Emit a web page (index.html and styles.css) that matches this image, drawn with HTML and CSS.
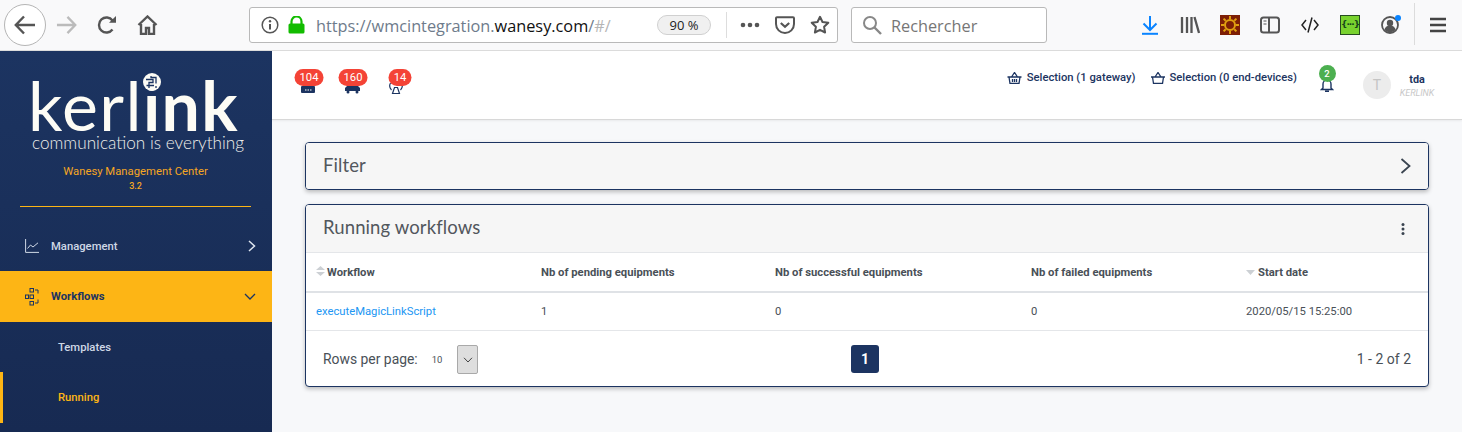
FILE: index.html
```html
<!DOCTYPE html>
<html lang="fr">
<head>
<meta charset="utf-8">
<title>Wanesy Management Center</title>
<link rel="stylesheet" href="styles.css">
</head>
<body>
<div class="toolbar">
  <div class="nav">
    <div class="back"><svg width="22" height="20" viewBox="0 0 22 20"><path d="M10 1.500 1.800 10l8.200 8.500M2 10h19" fill="none" stroke="#555" stroke-width="2.400"/></svg></div>
    <svg class="fwd" width="21" height="20" viewBox="0 0 22 20"><path d="M12 1.500 20.200 10 12 18.500M20 10H1" fill="none" stroke="#bbb" stroke-width="2.400"/></svg>
    <svg class="reload" width="20" height="20" viewBox="0 0 20 20"><path d="M15.500 14.500A7.500 7.500 0 1 1 15.500 5.500" fill="none" stroke="#555" stroke-width="2.400"/><path d="M12 7.800h7V1z" fill="#555"/></svg>
    <svg class="home" width="21" height="20" viewBox="0 0 21 20"><path d="M1.500 10 10.500 1.500l9 8.500" fill="none" stroke="#555" stroke-width="2.400"/><path d="M4 9v10h5v-6h3v6h5V9" fill="none" stroke="#555" stroke-width="2.400"/></svg>
  </div>
  <div class="urlbar">
    <svg class="info" width="18" height="18" viewBox="0 0 18 18"><circle cx="9" cy="9" r="7.800" fill="none" stroke="#555" stroke-width="1.500"/><path d="M9 8v5.500" stroke="#555" stroke-width="2"/><circle cx="9" cy="5.300" r="1.200" fill="#555"/></svg>
    <svg class="lock" width="17" height="18" viewBox="0 0 17 18"><path d="M3.500 8V5.500a5 5 0 0 1 10 0V8" fill="none" stroke="#12bc00" stroke-width="2.200"/><rect x="0.500" y="7.500" width="16" height="10" rx="1.500" fill="#12bc00"/></svg>
    <div class="url"><span class="url-dim">https://wmcintegration.</span><span class="url-main">wanesy.com</span><span class="url-dim">/</span><span class="url-faint">#/</span></div>
    <div class="zoom">90 %</div>
    <div class="urlsep"></div>
    <svg class="dots" width="20" height="6" viewBox="0 0 20 6"><circle cx="3" cy="3" r="2.300" fill="#555"/><circle cx="10" cy="3" r="2.300" fill="#555"/><circle cx="17" cy="3" r="2.300" fill="#555"/></svg>
    <svg class="pocket" width="20" height="18" viewBox="0 0 20 18"><path d="M2 1.200h16a1 1 0 0 1 1 1V8a9 9 0 0 1-18 0V2.200a1 1 0 0 1 1-1z" fill="none" stroke="#555" stroke-width="2"/><path d="M5.800 7 10 10.800 14.200 7" fill="none" stroke="#555" stroke-width="2.200"/></svg>
    <svg class="star" width="20" height="19" viewBox="0 0 20 19"><path d="M10 1.800 12.500 7l5.800.8-4.200 4 1 5.700L10 14.800l-5.100 2.700 1-5.700-4.200-4L7.500 7z" fill="none" stroke="#555" stroke-width="2" stroke-linejoin="round"/></svg>
  </div>
  <div class="search">
    <svg width="20" height="20" viewBox="0 0 20 20"><circle cx="8" cy="8" r="6" fill="none" stroke="#888" stroke-width="2"/><path d="M12.500 12.500 19 19" stroke="#888" stroke-width="2.400"/></svg>
    <span class="search-text">Rechercher</span>
  </div>
  <div class="tools">
    <div class="tool"><svg width="16" height="19" viewBox="0 0 16 19"><path d="M8 0v13M1.500 7.500 8 14l6.500-6.500" fill="none" stroke="#0a84ff" stroke-width="2"/><path d="M0 17.800h16" stroke="#0a84ff" stroke-width="2"/></svg></div>
    <div class="tool"><svg width="20" height="18" viewBox="0 0 20 18"><path d="M2 1v16M7 1v16M11.500 1v16M14.500 1 19 17" fill="none" stroke="#555" stroke-width="2.300"/></svg></div>
    <div class="tool"><div class="sun"><svg width="20" height="20" viewBox="0 0 20 20"><circle cx="10" cy="10" r="5" fill="none" stroke="#e0a010" stroke-width="2"/><path d="M10 1v3M10 16v3M1 10h3M16 10h3M3.600 3.600l2.100 2.100M14.300 14.300l2.100 2.100M3.600 16.400l2.100-2.100M14.300 5.700l2.100-2.100" stroke="#e0a010" stroke-width="2"/></svg></div></div>
    <div class="tool"><svg width="20" height="18" viewBox="0 0 20 18"><rect x="1" y="1.500" width="18" height="15" rx="2.500" fill="none" stroke="#555" stroke-width="2"/><path d="M9 1.500v15" stroke="#555" stroke-width="2"/><path d="M3.500 5h3M3.500 8h3" stroke="#555" stroke-width="1.200"/></svg></div>
    <div class="tool"><svg width="18" height="16" viewBox="0 0 18 16"><path d="M5 3 1 8l4 5M13 3l4 5-4 5M11 .5 7 15.500" fill="none" stroke="#222" stroke-width="1.500"/></svg></div>
    <div class="tool"><div class="curly">{···}</div></div>
    <div class="tool account"><svg width="18" height="18" viewBox="0 0 18 18"><circle cx="9" cy="9" r="8" fill="none" stroke="#555" stroke-width="1.800"/><circle cx="9" cy="7" r="3.200" fill="#555"/><path d="M3.500 14a5.500 4.500 0 0 1 11 0 8 8 0 0 1-11 0z" fill="#555"/></svg><i class="account-dot"></i></div>
  </div>
  <div class="toolsep"></div>
  <svg class="burger" width="16" height="16" viewBox="0 0 16 16"><path d="M0 2h16M0 8h16M0 14h16" stroke="#444" stroke-width="2.400"/></svg>
</div>

<div class="app">
  <aside class="sidebar">
    <div class="brand">
      <div class="logo">
        <div class="logo-word"><span>kerl</span><b>ink</b></div>
        <svg class="logo-mark" width="18" height="18" viewBox="0 0 18 18"><circle cx="9" cy="9" r="9" fill="#fdfcf5"/><path d="M3 6.500h7v3H6v3h5M8 3v1.500h5v6M3.500 12.500H6v2.500M13 13v2" fill="none" stroke="#1c3461" stroke-width="1.300"/></svg>
        <div class="logo-tag">communication is everything</div>
      </div>
      <div class="app-name">Wanesy Management Center</div>
      <div class="app-version">3.2</div>
    </div>
    <nav>
      <div class="menu-item">
        <svg width="14" height="14" viewBox="0 0 14 14"><path d="M.6 0v13.400H14" fill="none" stroke="#cfd8e6" stroke-width="1"/><path d="M2.500 9.500 5.500 6l2.500 2L13 3.800" fill="none" stroke="#cfd8e6" stroke-width="1"/></svg>
        <span>Management</span>
        <svg class="chev" width="8" height="12" viewBox="0 0 8 12"><path d="M1 1l5.500 5L1 11" fill="none" stroke="#dfe6f0" stroke-width="1.500"/></svg>
      </div>
      <div class="menu-item active">
        <svg width="14" height="18" viewBox="0 0 14 18"><g fill="none" stroke="#1c3461" stroke-width="1"><rect x="5" y=".5" width="3.500" height="3.500"/><rect x="5" y="7" width="3.500" height="3.500"/><rect x="5" y="13.500" width="3.500" height="3.500"/><rect x=".5" y="7" width="3" height="3.500"/><path d="M10 2h3v3.500M10 15h3v-3.500"/></g></svg>
        <span>Workflows</span>
        <svg class="chev" width="12" height="8" viewBox="0 0 12 8"><path d="M1 1l5 5 5-5" fill="none" stroke="#1c3461" stroke-width="1.300"/></svg>
      </div>
      <div class="sub-item">Templates</div>
      <div class="sub-item current">Running</div>
    </nav>
  </aside>

  <main class="main">
    <header class="topbar">
      <div class="alerts">
        <div class="alert">
          <span class="badge">104</span>
          <svg width="14" height="14" viewBox="0 0 14 14"><rect y="6" width="14" height="7" rx="1" fill="#1c3461"/><path d="M4 10h1.500M6.500 10H8M9 10h1.500" stroke="#fff" stroke-width="1"/></svg>
        </div>
        <div class="alert">
          <span class="badge">160</span>
          <svg width="15" height="14" viewBox="0 0 15 14"><path d="M0 8l2-2h11l2 2v3H0z" fill="#1c3461"/><circle cx="3" cy="12" r="1.500" fill="#1c3461"/><circle cx="12" cy="12" r="1.500" fill="#1c3461"/></svg>
        </div>
        <div class="alert alert-short">
          <span class="badge">14</span>
          <svg width="14" height="14" viewBox="0 0 14 14"><g fill="none" stroke="#1c3461" stroke-width="1.200"><path d="M1.500 3a6 6 0 0 0 1 7M12.500 3a6 6 0 0 1-1 7M3.500 13.500l2-6h3l2 6z"/></g></svg>
        </div>
      </div>
      <div class="selection">
        <svg width="15" height="12" viewBox="0 0 14 12"><path d="M0 5h14M1.500 5l1 6.500h9l1-6.500M4 5l3-4.500L10 5M5 7v3M7 7v3M9 7v3" fill="none" stroke="#1c3461" stroke-width="1.300"/></svg>
        <span>Selection (1 gateway)</span>
      </div>
      <div class="selection second">
        <svg width="14" height="12" viewBox="0 0 14 12"><path d="M0 5h14M1.500 5l1 6.500h9l1-6.500M4 5l3-4.500L10 5" fill="none" stroke="#1c3461" stroke-width="1.300"/></svg>
        <span>Selection (0 end-devices)</span>
      </div>
      <div class="bell">
        <svg width="14" height="14" viewBox="0 0 14 14"><path d="M3 10V6a4 4 0 0 1 8 0v4l1.500 1.500h-11zM5 13.300h4" fill="none" stroke="#1c3461" stroke-width="1.400"/></svg>
        <span class="bell-count">2</span>
      </div>
      <div class="avatar">T</div>
      <div class="user">
        <div class="user-name">tda</div>
        <div class="user-org">KERLINK</div>
      </div>
    </header>

    <section class="card filter">
      <div class="card-head">
        <h2>Filter</h2>
        <svg width="11" height="16" viewBox="0 0 11 16"><path d="M1.500 1l8 7-8 7" fill="none" stroke="#3a4450" stroke-width="1.800"/></svg>
      </div>
    </section>

    <section class="card">
      <div class="card-head">
        <h2>Running workflows</h2>
        <svg class="kebab" width="4" height="14" viewBox="0 0 4 14"><circle cx="2" cy="2.500" r="1.500" fill="#3a4450"/><circle cx="2" cy="7" r="1.500" fill="#3a4450"/><circle cx="2" cy="11.500" r="1.500" fill="#3a4450"/></svg>
      </div>
      <div class="grid-row grid-head">
        <div class="sort-cell"><svg class="sort-both" width="9" height="10" viewBox="0 0 9 10"><path d="M4.500 0 9 4H0zM0 6h9L4.500 10z" fill="#ccd0d4"/></svg><span>Workflow</span></div>
        <div>Nb of pending equipments</div>
        <div>Nb of successful equipments</div>
        <div>Nb of failed equipments</div>
        <div class="sort-cell"><svg class="sort-down" width="9" height="5" viewBox="0 0 9 5"><path d="M0 0h9L4.500 5z" fill="#ccd0d4"/></svg><span>Start date</span></div>
      </div>
      <div class="grid-row grid-body">
        <div><a class="link">executeMagicLinkScript</a></div>
        <div>1</div>
        <div>0</div>
        <div>0</div>
        <div>2020/05/15 15:25:00</div>
      </div>
      <div class="pager">
        <div class="rows">
          <span class="rows-label">Rows per page:</span>
          <span class="rows-value">10</span>
          <div class="rows-select"><svg width="10" height="6" viewBox="0 0 10 6"><path d="M1 .8 5 5 9 .8" fill="none" stroke="#444" stroke-width="1"/></svg></div>
        </div>
        <div class="page-btn">1</div>
        <div class="range">1 - 2 of 2</div>
      </div>
    </section>
  </main>
</div>
</body>
</html>
```

FILE: styles.css
```css
* { box-sizing: border-box; }
html, body { margin: 0; padding: 0; height: 432px; overflow: hidden; }
body { font-family: Roboto, sans-serif; background: #f7f8fa; }

.toolbar {
  height: 51px;
  display: flex;
  align-items: center;
  background: #f9f9fa;
  border-bottom: 1px solid #dcdcdc;
  padding-left: 4px;
  font-family: "Open Sans", sans-serif;
}
.nav { display: flex; align-items: center; width: 245px; flex: none; }
.back {
  width: 42px; height: 42px; border-radius: 50%;
  border: 1px solid #b5b5b5; background: #fff;
  display: flex; align-items: center; justify-content: center;
}
.fwd { margin-left: 10px; }
.reload { margin-left: 20px; }
.home { margin-left: 20px; }

.urlbar {
  width: 589px; height: 36px; flex: none;
  margin-top: -1px;
  display: flex; align-items: center;
  background: #fff;
  border: 1px solid #b9b9b9;
  border-radius: 3px;
  padding-left: 11px;
}
.lock { margin-left: 9px; flex: none; }
.url { margin-left: 11px; width: 328px; padding-top: 2px; font-size: 16.300px; white-space: nowrap; flex: none; }
.url-dim { color: #6e7b8b; }
.url-main { color: #111; }
.url-faint { color: #b5b5b5; }
.zoom {
  width: 54px; height: 20px; margin-left: 13px;
  border: 1px solid #d0d0d0; border-radius: 10px;
  background: #f0f0f0; color: #222;
  font-size: 13px; line-height: 18px; text-align: center;
}
.urlsep { width: 1px; height: 26px; background: #ddd; margin-left: 15px; }
.dots { margin-left: 13px; }
.pocket { margin-left: 15px; }
.star { margin-left: 15px; }

.search {
  width: 196px; height: 36px; flex: none;
  margin-left: 13px; margin-top: -1px;
  display: flex; align-items: center; gap: 9px;
  background: #fff;
  border: 1px solid #b9b9b9;
  border-radius: 3px;
  padding-left: 10px;
  font-size: 16.300px; color: #767676;
}
.search-text { padding-top: 2px; }
.tools { display: flex; margin-left: 83px; flex: none; }
.tool { width: 40px; height: 24px; display: flex; align-items: center; justify-content: center; position: relative; }
.sun { width: 20px; height: 20px; background: #7e1f05; }
.sun svg { display: block; }
.curly {
  width: 20px; height: 20px; background: #79d22e; border: 1px solid #274d20;
  font: 700 9px/17px "DejaVu Sans", sans-serif; color: #17451a; text-align: center; overflow: hidden; letter-spacing: -1px;
}
.account-dot {
  position: absolute; right: 9px; top: 2px;
  width: 6px; height: 6px; border-radius: 50%; background: #0a84ff;
}
.toolsep { width: 1px; height: 42px; background: #dcdcdc; margin-left: 4px; margin-top: -2px; flex: none; }
.burger { margin-left: 15px; flex: none; }

.app { display: flex; height: 381px; }

.sidebar {
  width: 272px; flex: none;
  background: linear-gradient(#1c3461, #172a52);
}
.brand {
  height: 156px;
  margin: 0 21px 0 20px;
  border-bottom: 1px solid #fdb515;
  text-align: center;
}
.logo { position: relative; padding: 25px 0 0 8px; text-align: left; }
.logo-word {
  font-family: Lato, sans-serif; font-weight: 400;
  font-size: 68px; line-height: 58px; height: 58px; color: #fdfcf5; white-space: nowrap; letter-spacing: 1.400px;
}
.logo-word b { font-weight: 700; }
.logo-mark { position: absolute; left: 123px; top: 22px; }
.logo-tag {
  font-family: Lato, sans-serif; font-weight: 300;
  font-size: 17.200px; line-height: 18px; color: #eeeeea; white-space: nowrap;
  padding-left: 4px;
}
.app-name { font-size: 11.300px; line-height: 14px; color: #f5a623; margin-top: 13px; }
.app-version { font-size: 9px; font-weight: 500; line-height: 10px; color: #f5a623; margin-top: 2px; }

nav { padding-top: 14px; }
.menu-item {
  height: 50px;
  display: flex; align-items: center;
  padding: 0 16px 0 25px;
  font-size: 11.250px; font-weight: 500; color: #cfd8e6;
}
.menu-item span { margin-left: 12px; flex: 1; }
.menu-item.active { background: #fdb515; color: #1c3461; font-weight: 700; height: 51px; }
.sub-item {
  height: 50px; line-height: 52px;
  padding-left: 58px;
  font-size: 11.250px; font-weight: 500; color: #cfd8e6;
}
.sub-item.current {
  height: 51px; line-height: 51px;
  color: #fdb515;
  border-left: 3px solid #fdb515;
  padding-left: 55px;
}

.main { flex: 1; min-width: 0; padding-bottom: 20px; }
.topbar {
  height: 69px;
  display: flex; align-items: center;
  background: #fff;
  border-bottom: 1px solid #d8d8d8;
  box-shadow: 0 1px 2px rgba(0,0,0,.06);
  margin-bottom: 22px;
  padding-right: 27px;
}
.alerts { display: flex; align-self: flex-start; margin-top: 18px; margin-left: 14px; margin-right: auto; }
.alert { width: 44px; height: 25px; position: relative; display: flex; justify-content: center; padding-top: 11px; }
.badge {
  position: absolute; left: calc(50% + 1px); top: 0; transform: translateX(-50%);
  min-width: 23px; height: 17px; padding: 0 5px;
  background: #f44336; color: #fff;
  border-radius: 9px;
  font-size: 11.250px; line-height: 17px; text-align: center;
}
.alert-short .badge { left: calc(50% + 4px); }
.selection {
  display: flex; align-items: center; gap: 5px;
  font-size: 11.250px; font-weight: 500; color: #1c3461;
  margin-top: -15px;
  white-space: nowrap;
}
.selection.second { margin-left: 16px; gap: 4px; }
.bell {
  position: relative; width: 14px; height: 14px;
  margin-left: 23px;
}
.bell svg { display: block; }
.bell-count {
  position: absolute; left: -1.500px; top: -13px;
  width: 17px; height: 17px; border-radius: 50%;
  background: #4caf50; color: #fff;
  font-size: 9.500px; font-weight: 500; line-height: 17px; text-align: center;
}
.avatar {
  width: 28px; height: 28px; border-radius: 50%;
  margin-left: 29px;
  background: #ececec; color: #c4c4c4;
  font-size: 14px; line-height: 28px; text-align: center;
}
.user { width: 36px; margin-left: 8px; text-align: center; margin-top: 1px; white-space: nowrap; }
.user-name { font-size: 10.800px; font-weight: 700; color: #1c3461; line-height: 14px; margin-bottom: 1px; }
.user-org { font-size: 9px; font-style: italic; color: #c8c8c8; line-height: 11px; }

.card {
  margin: 0 33px 14px;
  background: #fff;
  border: 1px solid #1c3461;
  border-radius: 4px;
  box-shadow: 0 2px 4px rgba(0,0,0,.25);
  overflow: hidden;
}
.filter { background: #f6f6f6; }
.card-head {
  height: 47px;
  display: flex; align-items: center; justify-content: space-between;
  padding: 0 17px;
  background: #f6f6f6;
}
.filter .card-head { height: 46px; }
.card-head h2 {
  margin: 0 0 3px;
  font-family: Lato, sans-serif; font-weight: 400; font-size: 18.500px; letter-spacing: .1px; color: #52575d;
}
.kebab { margin-right: 6px; }
.grid-row {
  display: grid;
  grid-template-columns: 225px 234px 256px 215px 1fr;
  padding-left: 10px;
  align-items: center;
  font-size: 11.250px; color: #495057;
}
.grid-head {
  height: 41px;
  border-top: 1px solid #e4e6e9;
  border-bottom: 2px solid #dfe2e6;
  font-weight: 700;
}
.grid-body {
  height: 38px;
  border-bottom: 1px solid #e4e6e9;
}
.sort-cell { display: flex; align-items: center; }
.sort-both { margin: -3px 2px 0 0; }
.sort-down { margin-right: 3px; }
.link { color: #2196f3; }

.pager {
  height: 55px;
  display: grid;
  grid-template-columns: 1fr auto 1fr;
  align-items: center;
  padding: 0 17px;
  font-size: 14px; color: #495057;
}
.rows { display: flex; align-items: center; }
.rows-label { font-size: 13.900px; }
.rows-value { font-size: 9.500px; margin: 2px 0 0 14px; }
.rows-select {
  width: 21px; height: 29px; margin: 2px 0 0 15px;
  background: #dedede; border: 1px solid #a9a9a9; border-radius: 2px;
  display: flex; align-items: center; justify-content: center;
}
.page-btn {
  width: 28px; height: 28px; margin-right: 4px;
  background: #1c3461; color: #fff; border-radius: 3px;
  font-weight: 700; line-height: 28px; text-align: center;
}
.range { text-align: right; }
```
